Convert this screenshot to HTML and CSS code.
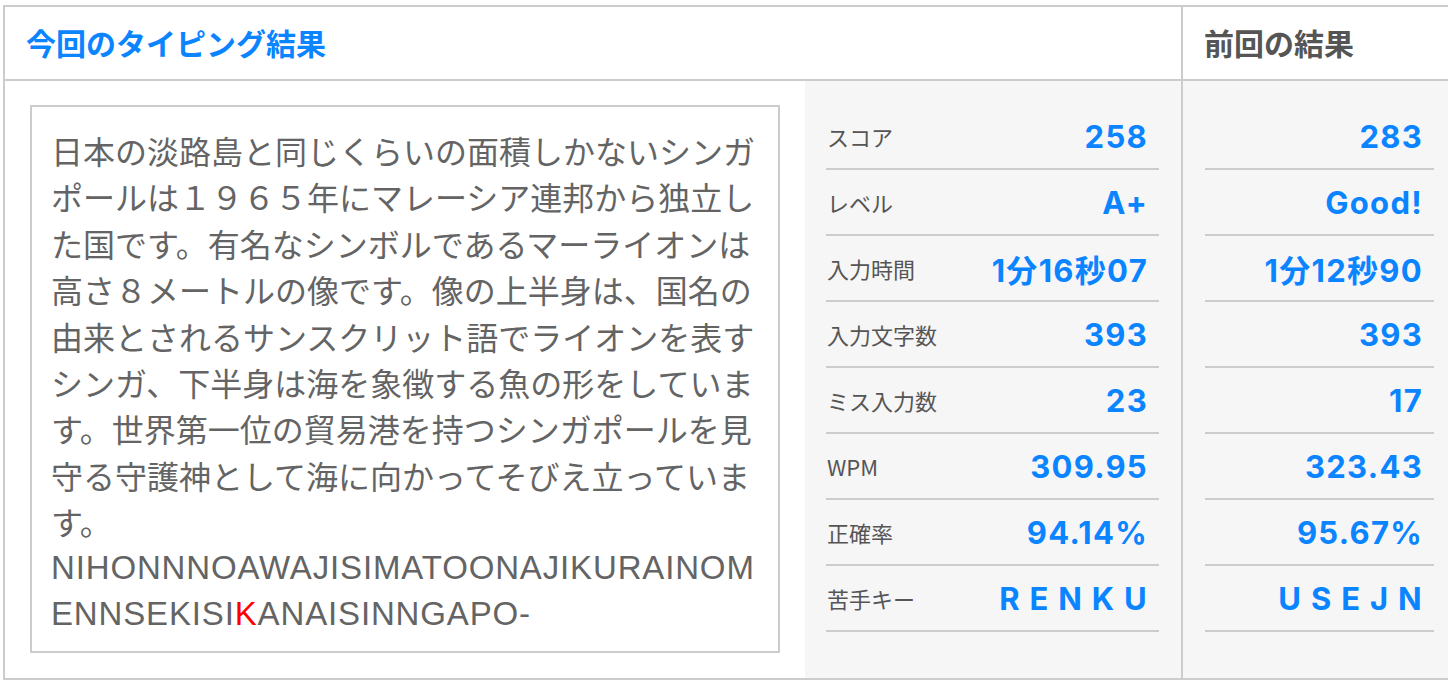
FILE: index.html
```html
<!DOCTYPE html>
<html lang="ja">
<head>
<meta charset="utf-8">
<title>タイピング結果</title>
<link rel="stylesheet" href="styles.css">
</head>
<body>
<div class="results">
  <div class="head-row">
    <div class="head head-current">今回のタイピング結果</div>
    <div class="head head-prev">前回の結果</div>
  </div>
  <div class="body-row">
    <div class="text-cell">
      <div class="text-box">
        <p class="jp">日本の淡路島と同じくらいの面積しかないシンガポールは１９６５年にマレーシア連邦から独立した国です。有名なシンボルであるマーライオンは高さ８メートルの像です。像の上半身は、国名の由来とされるサンスクリット語でライオンを表すシンガ、下半身は海を象徴する魚の形をしています。世界第一位の貿易港を持つシンガポールを見守る守護神として海に向かってそびえ立っています。</p>
        <p class="romaji">NIHONNNOAWAJISIMATOONAJIKURAINOMENNSEKISI<span class="miss">K</span>ANAISINNGAPO-</p>
      </div>
    </div>
    <div class="stats stats-current">
      <div class="stat"><span class="label">スコア</span><span class="value">258</span></div>
      <div class="stat"><span class="label">レベル</span><span class="value">A+</span></div>
      <div class="stat"><span class="label">入力時間</span><span class="value">1分16秒07</span></div>
      <div class="stat"><span class="label">入力文字数</span><span class="value">393</span></div>
      <div class="stat"><span class="label">ミス入力数</span><span class="value">23</span></div>
      <div class="stat"><span class="label">WPM</span><span class="value">309.95</span></div>
      <div class="stat"><span class="label">正確率</span><span class="value">94.14%</span></div>
      <div class="stat"><span class="label">苦手キー</span><span class="value keys">R E N K U</span></div>
    </div>
    <div class="stats stats-prev">
      <div class="stat"><span class="value">283</span></div>
      <div class="stat"><span class="value">Good!</span></div>
      <div class="stat"><span class="value">1分12秒90</span></div>
      <div class="stat"><span class="value">393</span></div>
      <div class="stat"><span class="value">17</span></div>
      <div class="stat"><span class="value">323.43</span></div>
      <div class="stat"><span class="value">95.67%</span></div>
      <div class="stat"><span class="value keys">U S E J N</span></div>
    </div>
  </div>
</div>
</body>
</html>
```

FILE: styles.css
```css
html, body {
  margin: 0;
  padding: 0;
  background: #fff;
  overflow: hidden;
}

body {
  font-family: "Liberation Sans", "Noto Sans CJK JP", sans-serif;
  color: #646464;
}

.results {
  width: 1451px;
  margin: 5px 0 0 3px;
  border: 2px solid #cccccc;
  box-sizing: content-box;
}

.head-row {
  display: flex;
  border-bottom: 2px solid #cccccc;
}

.head {
  height: 72px;
  display: flex;
  align-items: center;
  padding-left: 21px;
  padding-bottom: 3px;
  box-sizing: border-box;
  font-family: "Noto Sans CJK JP", sans-serif;
  font-weight: 700;
  font-size: 30px;
}

.head-current {
  width: 1178px;
  border-right: 2px solid #cccccc;
  color: #0a84ff;
}

.head-prev {
  width: 273px;
  color: #555555;
}

.body-row {
  display: flex;
}

.text-cell {
  width: 800px;
  padding: 24px 25px 25px;
  box-sizing: border-box;
  background: #fff;
}

.text-box {
  border: 2px solid #cccccc;
  padding: 20px 19px 14px 19px;
}

.text-box p {
  margin: 0;
  font-size: 32px;
  line-height: 46.4px;
  word-break: break-all;
}

.jp {
  font-family: "Noto Sans CJK JP", sans-serif;
}

.romaji {
  font-family: "Liberation Sans", sans-serif;
  font-size: 33px !important;
  letter-spacing: 0.85px;
}

.miss {
  color: #ff0000;
}

.stats {
  background: #f6f6f6;
  padding: 23px 22px 0 21px;
  box-sizing: border-box;
}

.stats-current {
  width: 378px;
  border-right: 2px solid #cccccc;
}

.stats-prev {
  width: 273px;
  padding-left: 22px;
}

.stat {
  height: 66px;
  box-sizing: border-box;
  border-bottom: 2px solid #cccccc;
  display: flex;
  align-items: center;
  justify-content: space-between;
}

.stats-prev .stat {
  justify-content: flex-end;
}

.label {
  font-family: "Noto Sans CJK JP", sans-serif;
  font-size: 22px;
  color: #555555;
  padding-left: 1px;
}

.value {
  font-family: Inter, "Noto Sans CJK JP", sans-serif;
  font-weight: 700;
  font-size: 31px;
  letter-spacing: 1.3px;
  color: #0a84ff;
  padding-right: 11px;
}

.keys {
  word-spacing: 0;
}
```
